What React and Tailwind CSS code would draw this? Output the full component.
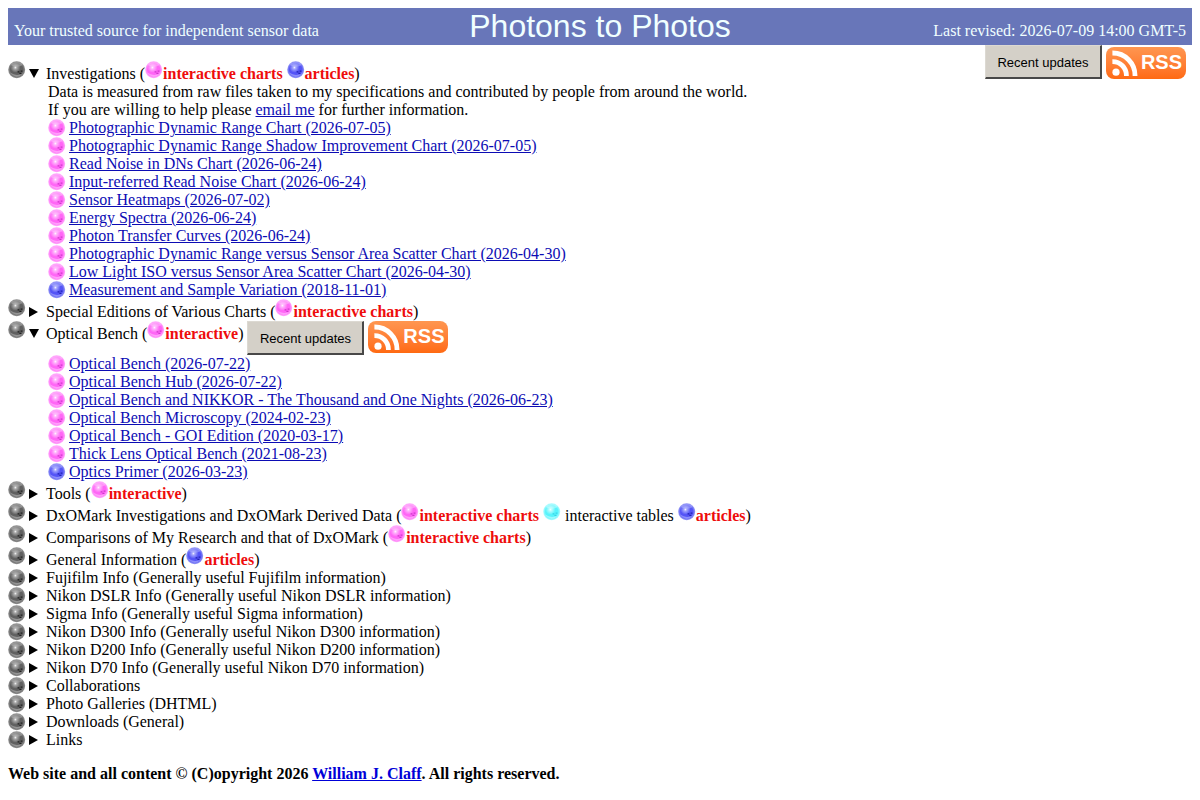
import { useId } from "react";

const BALL_COLORS = {
  gray: { light: "#c8c8c8", base: "#606060", edge: "#949494", speck: "#101010" },
  pink: { light: "#ffd4ff", base: "#ff66f6", edge: "#ffb0fc", speck: "#c02cc0" },
  blue: { light: "#c4c8ff", base: "#5454f6", edge: "#989cf4", speck: "#1414a0" },
  cyan: { light: "#e0ffff", base: "#58f4fc", edge: "#b4fcff", speck: "#30cce0" },
};

const investigations = [
  { label: "Photographic Dynamic Range Chart (2026-07-05)", color: "pink" },
  { label: "Photographic Dynamic Range Shadow Improvement Chart (2026-07-05)", color: "pink" },
  { label: "Read Noise in DNs Chart (2026-06-24)", color: "pink" },
  { label: "Input-referred Read Noise Chart (2026-06-24)", color: "pink" },
  { label: "Sensor Heatmaps (2026-07-02)", color: "pink" },
  { label: "Energy Spectra (2026-06-24)", color: "pink" },
  { label: "Photon Transfer Curves (2026-06-24)", color: "pink" },
  { label: "Photographic Dynamic Range versus Sensor Area Scatter Chart (2026-04-30)", color: "pink" },
  { label: "Low Light ISO versus Sensor Area Scatter Chart (2026-04-30)", color: "pink" },
  { label: "Measurement and Sample Variation (2018-11-01)", color: "blue" },
];

const opticalBench = [
  { label: "Optical Bench (2026-07-22)", color: "pink" },
  { label: "Optical Bench Hub (2026-07-22)", color: "pink" },
  { label: "Optical Bench and NIKKOR - The Thousand and One Nights (2026-06-23)", color: "pink" },
  { label: "Optical Bench Microscopy (2024-02-23)", color: "pink" },
  { label: "Optical Bench - GOI Edition (2020-03-17)", color: "pink" },
  { label: "Thick Lens Optical Bench (2021-08-23)", color: "pink" },
  { label: "Optics Primer (2026-03-23)", color: "blue" },
];

const plainSections = [
  "Fujifilm Info (Generally useful Fujifilm information)",
  "Nikon DSLR Info (Generally useful Nikon DSLR information)",
  "Sigma Info (Generally useful Sigma information)",
  "Nikon D300 Info (Generally useful Nikon D300 information)",
  "Nikon D200 Info (Generally useful Nikon D200 information)",
  "Nikon D70 Info (Generally useful Nikon D70 information)",
  "Collaborations",
  "Photo Galleries (DHTML)",
  "Downloads (General)",
  "Links",
];

function Ball({ color }) {
  const id = useId();
  const c = BALL_COLORS[color];
  return (
    <svg className="inline size-[18px] shrink-0 align-baseline" viewBox="0 0 18 18" aria-hidden="true">
      <defs>
        <radialGradient id={id} cx="0.5" cy="0.5" r="0.5">
          <stop offset="0" stopColor={c.base} />
          <stop offset="0.72" stopColor={c.base} />
          <stop offset="1" stopColor={c.edge} />
        </radialGradient>
        <radialGradient id={`${id}-shine`}>
          <stop offset="0" stopColor="#fff" stopOpacity="0.95" />
          <stop offset="0.3" stopColor={c.light} stopOpacity="0.7" />
          <stop offset="1" stopColor={c.light} stopOpacity="0" />
        </radialGradient>
      </defs>
      <circle cx="8.7" cy="8.7" r="8.5" fill={`url(#${id})`} />
      <ellipse cx="8.7" cy="3.4" rx="5.6" ry="2.4" fill={c.light} opacity="0.4" />
      <circle cx="7.4" cy="6.6" r="5" fill={`url(#${id}-shine)`} />
      <path d="M2 11.6Q8.5 19.6 15.2 12Q9 16 2 11.6Z" fill={c.light} opacity="0.5" />
      <path d="M9.6 10.2h1.8v1.2H9.6zM12.6 9.4h1.8v1.4h-1.8zM11.4 11.8h2v1.1h-2z" fill={c.speck} opacity="0.8" />
    </svg>
  );
}

function Tag({ color = "pink", children }) {
  return (
    <>
      <Ball color={color} />
      <b className="font-bold text-[#ee0c0c]">{children}</b>
    </>
  );
}

function UpdatesButton() {
  return (
    <button
      type="button"
      className="h-[34px] w-[117px] border-t border-r-2 border-b-2 border-l border-t-[#dcd9d2] border-r-[#484848] border-b-[#484848] border-l-[#dcd9d2] bg-[#d4d0c8] pt-0.5 align-top font-['Liberation_Sans',sans-serif] text-[13px] whitespace-nowrap text-black"
    >
      Recent updates
    </button>
  );
}

function RssLink() {
  return (
    <a
      href="#rss"
      className="inline-flex h-8 w-20 items-center justify-between rounded-lg bg-linear-to-b from-[#ff9650] to-[#ff6a10] pr-1 pl-1.5 align-top font-['Liberation_Sans',sans-serif] text-xl font-bold text-white"
    >
      <svg className="size-[26px]" viewBox="0 0 26 26" fill="none" stroke="#fff" strokeWidth="4.8" aria-hidden="true">
        <circle cx="4" cy="22.2" r="3.6" fill="#fff" stroke="none" />
        <path d="M0.4 11.6A13.8 13.8 0 0 1 14.4 26" />
        <path d="M0.4 3A22.4 22.4 0 0 1 23 26" />
      </svg>
      <span className="pb-0.5">RSS</span>
    </a>
  );
}

function Section({ title, open, children }) {
  return (
    <li className="flex items-start gap-[3px]">
      <Ball color="gray" />
      <details open={open} className="group min-w-0 flex-1">
        <summary className="flex cursor-default list-none items-start gap-[7px]">
          {/* open marker hangs from the top of the line, closed marker sits at the bottom */}
          <span className="flex w-[10px] shrink-0 self-stretch">
            <svg className="hidden h-[9px] w-[10px] shrink-0 self-start group-open:mt-2 group-open:block" viewBox="0 0 10 9" aria-hidden="true">
              <path d="M0 0H10L5 9Z" />
            </svg>
            <svg className="mb-1 h-[10px] w-[10px] self-end group-open:hidden" viewBox="0 0 10 10" aria-hidden="true">
              <path d="M0 0L9 5L0 10Z" />
            </svg>
          </span>
          <span>{title}</span>
        </summary>
        {children && <div className="pl-[19px]">{children}</div>}
      </details>
    </li>
  );
}

function LinkList({ items }) {
  return (
    <ul>
      {items.map((item) => (
        <li key={item.label} className="flex items-start gap-[3px]">
          <Ball color={item.color} />
          <a href="#chart" className="text-[#0c0cb4] underline">{item.label}</a>
        </li>
      ))}
    </ul>
  );
}

export default function App() {
  return (
    <div className="bg-white p-2 font-['Liberation_Serif',serif] text-base/[18px] text-black">
      <header className="grid grid-cols-[1fr_auto_1fr] items-end bg-[#6876b9] px-1.5 text-[#f0ffff]">
        <p className="pb-[5px]">Your trusted source for independent sensor data</p>
        <h1 className="font-['Liberation_Sans',sans-serif] text-[32px]/[37px]">Photons to Photos</h1>
        <p className="pb-[5px] text-right">Last revised: 2026-07-09 14:00 GMT-5</p>
      </header>

      <main className="flex items-start justify-between">
        <ul className="min-w-0 flex-1 pt-4">
          <Section
            open
            title={<>Investigations (<Tag>interactive charts</Tag> <Tag color="blue">articles</Tag>)</>}
          >
            <p>Data is measured from raw files taken to my specifications and contributed by people from around the world.</p>
            <p>
              If you are willing to help please <a href="#email" className="text-[#0c0cb4] underline">email me</a> for further information.
            </p>
            <LinkList items={investigations} />
          </Section>
          <Section title={<>Special Editions of Various Charts (<Tag>interactive charts</Tag>)</>} />
          <Section
            open
            title={<>Optical Bench (<Tag>interactive</Tag>) <UpdatesButton /> <RssLink /></>}
          >
            <LinkList items={opticalBench} />
          </Section>
          <Section title={<>Tools (<Tag>interactive</Tag>)</>} />
          <Section
            title={
              <>
                DxOMark Investigations and DxOMark Derived Data (<Tag>interactive charts</Tag>{" "}
                <Ball color="cyan" /> interactive tables <Tag color="blue">articles</Tag>)
              </>
            }
          />
          <Section title={<>Comparisons of My Research and that of DxOMark (<Tag>interactive charts</Tag>)</>} />
          <Section title={<>General Information (<Tag color="blue">articles</Tag>)</>} />
          {plainSections.map((title) => (
            <Section key={title} title={title} />
          ))}
        </ul>
        <div className="flex shrink-0 items-end gap-1 pr-1.5">
          <UpdatesButton />
          <RssLink />
        </div>
      </main>

      <footer className="pt-4 font-bold">
        Web site and all content © (C)opyright 2026{" "}
        <a href="#author" className="text-[#0000d8] underline">William J. Claff</a>. All rights reserved.
      </footer>
    </div>
  );
}
